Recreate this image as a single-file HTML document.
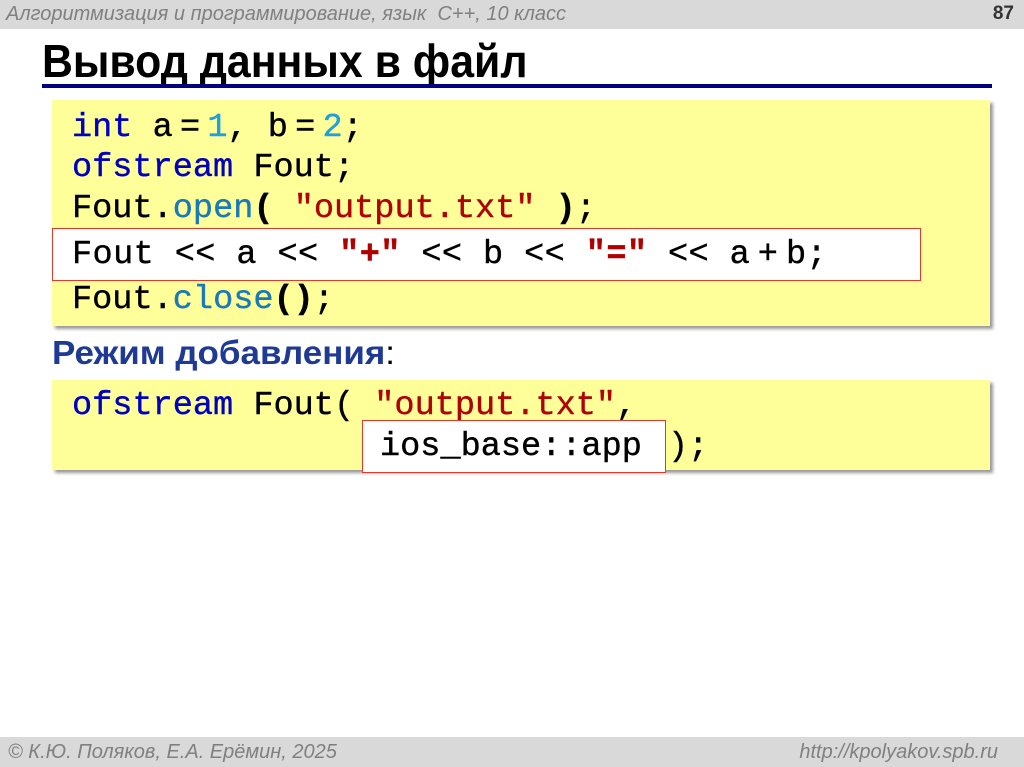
<!DOCTYPE html>
<html><head><meta charset="utf-8"><style>
body{margin:0;width:1024px;height:767px;background:#fff;position:relative;overflow:hidden;font-family:"Liberation Sans",sans-serif}
.hdr{position:absolute;left:0;top:0;width:1024px;height:29px;background:#d9d9d9}
.hdr .t{position:absolute;left:6px;top:3px;font-size:20px;font-style:italic;color:#808080;white-space:nowrap}
.hdr .n{position:absolute;right:10px;top:3px;font-size:19px;font-weight:bold;color:#333}
.ftr{position:absolute;left:0;top:737px;width:1024px;height:30px;background:#d9d9d9;font-size:20px;font-style:italic;color:#808080}
h1{position:absolute;left:42px;top:34px;margin:0;font-size:46px;font-weight:bold;color:#000;transform:scaleX(.93);transform-origin:left;white-space:nowrap}
.line{position:absolute;left:42px;top:84px;width:950px;height:4px;background:#000080}
.box{position:absolute;background:#ffff99;box-shadow:3px 3px 3px #999}
.red{position:absolute;background:#fff;border:1.5px solid #e03a2a}
.c{position:absolute;font-family:"Liberation Mono",monospace;font-size:33.6px;color:#000;white-space:pre;line-height:40px;-webkit-text-stroke:.4px #000}
.k{color:#0000c0;-webkit-text-stroke:.4px #0000c0}.num{color:#1ea0dc;-webkit-text-stroke:.4px #1ea0dc}.s{color:#b00000;-webkit-text-stroke:.4px #b00000}.sb{font-weight:bold}.m{color:#1a7ab8;-webkit-text-stroke:.4px #1a7ab8}
.sp{font-size:12px}
.b{font-weight:bold}
</style></head><body>
<div class="hdr"><div class="t">Алгоритмизация и программирование, язык&nbsp; C++, 10 класс</div><div class="n">87</div></div>
<h1>Вывод данных в файл</h1>
<div class="line"></div>
<div class="box" style="left:52px;top:100px;width:938px;height:226px"></div>
<div class="red" style="left:52px;top:228px;width:867px;height:51px"></div>
<div class="c" style="left:72px;top:108px"><span class="k">int</span> a<span class="sp"> </span>=<span class="sp"> </span><span class="num">1</span>, b<span class="sp"> </span>=<span class="sp"> </span><span class="num">2</span>;</div>
<div class="c" style="left:72px;top:148px"><span class="k">ofstream</span> Fout;</div>
<div class="c" style="left:72px;top:189px">Fout.<span class="m">open</span><span class="b">(</span> <span class="s">"output.txt"</span> <span class="b">)</span>;</div>
<div class="c" style="left:72px;top:235px;letter-spacing:.4px">Fout &lt;&lt; a &lt;&lt; <span class="s sb">"+"</span> &lt;&lt; b &lt;&lt; <span class="s sb">"="</span> &lt;&lt; a<span class="sp"> </span>+<span class="sp"> </span>b;</div>
<div class="c" style="left:72px;top:280px">Fout.<span class="m">close</span><span class="b">()</span>;</div>
<div style="position:absolute;left:52px;top:334px;font-size:33px;font-weight:bold;color:#1f3a93;transform:scaleX(1.06);transform-origin:left;white-space:nowrap">Режим добавления<span style="font-weight:normal;color:#000">:</span></div>
<div class="box" style="left:52px;top:380px;width:938px;height:90px"></div>
<div class="c" style="left:72px;top:386px"><span class="k">ofstream</span> Fout( <span class="s">"output.txt"</span>,</div>
<div class="red" style="left:362px;top:420px;width:302px;height:51px"></div>
<div class="c" style="left:380px;top:427px">ios_base::app</div>
<div class="c" style="left:668px;top:427px">);</div>
<div class="ftr"><span style="position:absolute;left:8px;top:4px">© К.Ю. Поляков, Е.А. Ерёмин, 2025</span><span style="position:absolute;right:26px;top:4px">http://kpolyakov.spb.ru</span></div>
</body></html>
